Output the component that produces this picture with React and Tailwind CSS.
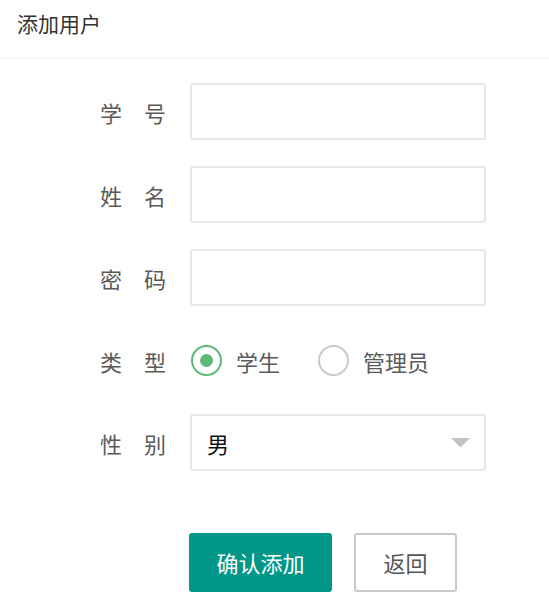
import { useState } from 'react';

const font = { fontFamily: '"Noto Sans CJK SC", "Noto Sans", sans-serif' };

function Label({ text }) {
    return (
        <div className="w-[190px] shrink-0 flex justify-end pr-[24px]">
            <div className="flex gap-[22px] text-[22px] text-[#5a5a5a] leading-none">
                <span>{text[0]}</span>
                <span>{text[1]}</span>
            </div>
        </div>
    );
}

function Radio({ checked, label, onClick }) {
    return (
        <button type="button" onClick={onClick} className="flex items-center gap-[14px]">
            <span
                className={
                    checked
                        ? 'w-[31px] h-[31px] rounded-full border-[2.5px] border-[#5fb878] flex items-center justify-center'
                        : 'w-[31px] h-[31px] rounded-full border-[2.5px] border-[#c9c9c9] flex items-center justify-center'
                }
            >
                {checked && <span className="w-[13px] h-[13px] rounded-full bg-[#5fb878]"></span>}
            </span>
            <span className="text-[22px] text-[#5a5a5a] leading-none">{label}</span>
        </button>
    );
}

export default function App() {
    const [type, setType] = useState('student');

    return (
        <div className="w-[549px] min-h-[609px] bg-white" style={font}>
            {/* Card header */}
            <div className="h-[59px] px-[17px] pt-[8px] border-b-2 border-[#f6f6f6] text-[21px] leading-[30px] text-[#333]">
                添加用户
            </div>

            {/* Form */}
            <div className="pt-[24px] flex flex-col gap-[26px]">
                {['学号', '姓名', '密码'].map((l) => (
                    <div key={l} className="flex items-center">
                        <Label text={l} />
                        <input className="w-[296px] h-[57px] border-2 border-[#e8e8e8] rounded-[3px] px-[15px] text-[22px] outline-none" />
                    </div>
                ))}

                <div className="flex items-center h-[57px]">
                    <Label text="类型" />
                    <div className="flex items-center gap-[38px] pl-[1px]">
                        <Radio checked={type === 'student'} label="学生" onClick={() => setType('student')} />
                        <Radio checked={type === 'admin'} label="管理员" onClick={() => setType('admin')} />
                    </div>
                </div>

                <div className="flex items-center -mt-[1px]">
                    <Label text="性别" />
                    <div className="w-[296px] h-[57px] border-2 border-[#e8e8e8] rounded-[3px] pl-[15px] pr-[14px] flex items-center justify-between">
                        <span className="text-[22px] text-[#111] leading-none">男</span>
                        <svg width="19" height="10" viewBox="0 0 19 10">
                            <path d="M0 0 L19 0 L9.5 9.5 Z" fill="#c2c2c2" />
                        </svg>
                    </div>
                </div>

                <div className="flex items-center gap-[22px] pl-[189px] mt-[36px]">
                    <button className="w-[143px] h-[59px] bg-[#009688] rounded-[3px] text-white text-[22px]">
                        确认添加
                    </button>
                    <button className="w-[103px] h-[59px] bg-white border-2 border-[#c9c9c9] rounded-[3px] text-[#555] text-[22px]">
                        返回
                    </button>
                </div>
            </div>
        </div>
    );
}
